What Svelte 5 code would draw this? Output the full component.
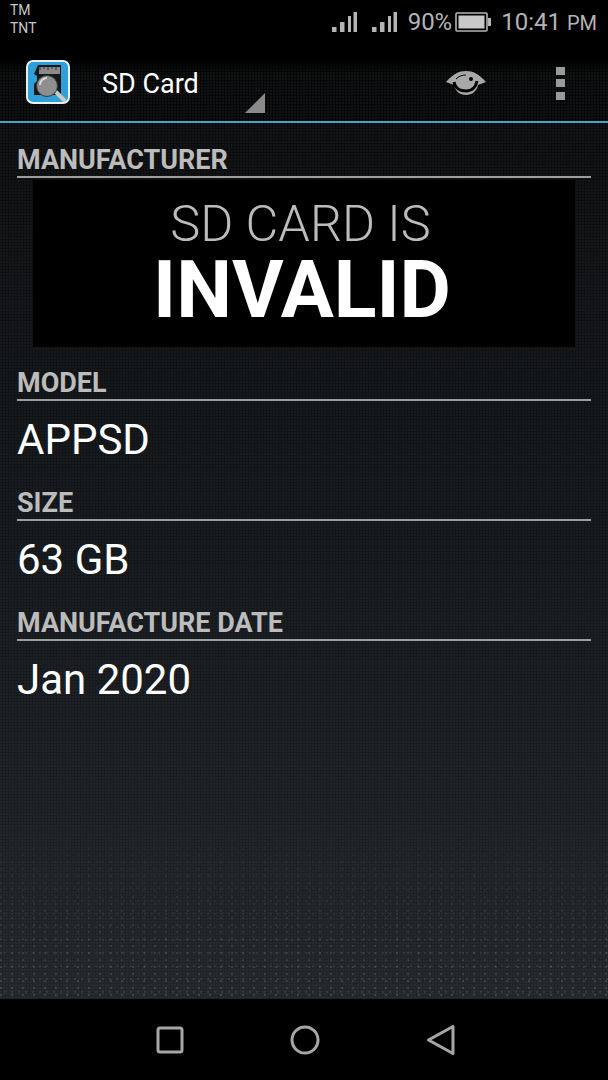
<script>
  const fields = [
    { label: "MODEL", value: "APPSD" },
    { label: "SIZE", value: "63 GB" },
    { label: "MANUFACTURE DATE", value: "Jan 2020" }
  ];
</script>

<div class="phone">
  <header class="status">
    <div class="carrier">
      <span>TM</span>
      <span>TNT</span>
    </div>
    <div class="status-right">
      {#each [0, 1] as s}
        <svg class="signal" width="26" height="22" viewBox="0 0 26 22">
          <rect x="0" y="16" width="4.500" height="5" fill="#b4b4b4" />
          <rect x="8" y="11" width="4.500" height="10" fill="#b4b4b4" />
          <rect x="16" y="5" width="3" height="16" fill="#b4b4b4" />
          <rect x="21.500" y="1" width="3.500" height="20" fill="#b4b4b4" />
        </svg>
      {/each}
      <span class="pct">90%</span>
      <svg class="battery" width="38" height="20" viewBox="0 0 38 20">
        <rect x="1" y="1" width="31" height="18" rx="1" fill="none" stroke="#b4b4b4" stroke-width="1.6" />
        <rect x="3.500" y="3.500" width="26" height="13" fill="#c8c8c8" />
        <rect x="33" y="6" width="3" height="8" fill="#b4b4b4" />
      </svg>
      <span class="time">10:41 <small>PM</small></span>
    </div>
  </header>

  <nav class="actionbar">
    <svg class="logo" width="44" height="44" viewBox="0 0 44 44">
      <rect x="1" y="1" width="42" height="42" rx="6" fill="#2f9fd8" stroke="#e8f0f4" stroke-width="2" />
      <path d="M12 5h23v30H8V24l3-3v-5l-3-2z" fill="#15181b" />
      <rect x="13" y="7" width="21" height="7" fill="#8a8a8a" />
      <path d="M14 7v3M18 7v2M22 7v3M26 7v2M30 7v3" stroke="#2a2a2a" stroke-width="1" />
      <path d="M29 31l9 9" stroke="#c9c9c9" stroke-width="4" stroke-linecap="round" />
      <circle cx="21" cy="26" r="10.500" fill="#8e8e8e" stroke="#3a3a3a" stroke-width="1" />
      <path d="M14 25a7 7 0 0 1 7-7" fill="none" stroke="#d8d8d8" stroke-width="2" />
    </svg>
    <div class="spinner">
      <span>SD Card</span>
      <i class="corner"></i>
    </div>
    <svg class="eye" width="42" height="26" viewBox="0 0 42 26">
      <path d="M1 12C8 4 14 1 21 1s13 3 20 11l-8 3c-1 6-6 10-12 10S10 21 9 15z" fill="#a8a8a8" />
      <path d="M9 12c1 6 6 9 12 9s10-4 11-10" fill="none" stroke="#000" stroke-width="3" />
      <path d="M11 9C14 6 17 5 21 5" fill="none" stroke="#000" stroke-width="1" />
      <circle cx="26" cy="9" r="2" fill="#000" />
    </svg>
    <div class="overflow">
      <i></i><i></i><i></i>
    </div>
  </nav>

  <main class="content">
    <section class="maker">
      <h2>MANUFACTURER</h2>
      <div class="invalid">
        <span class="thin">SD CARD IS</span>
        <span class="bold">INVALID</span>
      </div>
    </section>
    {#each fields as f}
      <section class="field">
        <h2>{f.label}</h2>
        <p>{f.value}</p>
      </section>
    {/each}
  </main>

  <footer class="navbar">
    <svg width="28" height="28" viewBox="0 0 28 28">
      <rect x="2" y="2" width="24" height="24" rx="2" fill="none" stroke="#a6a6a6" stroke-width="3" />
    </svg>
    <svg width="30" height="30" viewBox="0 0 30 30">
      <circle cx="15" cy="15" r="13" fill="none" stroke="#a6a6a6" stroke-width="3" />
    </svg>
    <svg width="30" height="32" viewBox="0 0 30 32">
      <path d="M27 2.500V29.500L2.500 16z" fill="none" stroke="#a6a6a6" stroke-width="3" stroke-linejoin="round" />
    </svg>
  </footer>
</div>

<style>
  :global(body) {
    margin: 0;
    background: #000;
  }

  .phone {
    width: 608px;
    height: 1080px;
    display: flex;
    flex-direction: column;
    font-family: Roboto, "Liberation Sans", sans-serif;
    color: #fff;
    overflow: hidden;
  }

  .status {
    height: 45px;
    flex: none;
    background: #000;
    display: flex;
    justify-content: space-between;
  }

  .carrier {
    display: flex;
    flex-direction: column;
    padding: 1px 0 0 10px;
    font-size: 14px;
    line-height: 18px;
    color: #c8c8c8;
  }

  .status-right {
    display: flex;
    align-items: center;
    padding: 0 11px 2px 0;
    color: #b4b4b4;
  }

  .signal {
    margin-right: 14px;
  }
  .signal + .signal {
    margin-right: 10px;
  }

  .pct {
    font-size: 24px;
    margin-right: 3px;
  }

  .battery {
    margin-right: 8px;
  }

  .time {
    font-size: 24px;
  }
  .time small {
    font-size: 20px;
  }

  .actionbar {
    height: 76px;
    flex: none;
    display: flex;
    align-items: center;
    background:
      linear-gradient(180deg, #000 0, #000 14px, transparent 30px),
      radial-gradient(circle at 1px 1px, rgba(255, 255, 255, 0.05) 0.7px, transparent 0.9px) 0 0 / 3px 3px,
      #050607;
    border-bottom: 2px solid #4f9fc4;
    box-sizing: content-box;
    padding-left: 26px;
  }

  .logo {
    flex: none;
    margin-bottom: 3px;
  }

  .spinner {
    width: 163px;
    height: 76px;
    margin-left: 32px;
    padding-top: 2px;
    box-sizing: border-box;
    position: relative;
    display: flex;
    align-items: center;
    font-size: 27px;
  }

  .corner {
    position: absolute;
    right: 0;
    bottom: 8px;
    width: 0;
    height: 0;
    border-left: 20px solid transparent;
    border-bottom: 20px solid #8a8a8a;
  }

  .eye {
    margin-left: 180px;
  }

  .overflow {
    margin-left: 69px;
    display: flex;
    flex-direction: column;
    gap: 4.500px;
  }
  .overflow i {
    width: 9px;
    height: 8px;
    background: #9a9a9a;
  }

  .content {
    flex: 1;
    position: relative;
    padding: 23px 17px 0;
    background:
      radial-gradient(circle at 1px 1px, rgba(255, 255, 255, 0.03) 0.7px, transparent 0.9px) 0 0 / 3px 3px,
      linear-gradient(180deg, #0b0c0e 0%, #111417 35%, #181b1f 70%, #212428 100%);
  }

  /* sparse grain that shows up toward the bottom of the wallpaper */
  .content::after {
    content: "";
    position: absolute;
    left: 0;
    right: 0;
    bottom: 0;
    height: 180px;
    background:
      radial-gradient(circle at 1px 1px, rgba(255, 255, 255, 0.14) 0.7px, transparent 1px) 0 0 / 11px 7px,
      radial-gradient(circle at 2px 2px, rgba(255, 255, 255, 0.1) 0.7px, transparent 1px) 3px 2px / 7px 13px;
    mask-image: linear-gradient(180deg, transparent, #000);
  }

  h2 {
    margin: 0;
    height: 32px;
    line-height: 29px;
    box-sizing: border-box;
    font-size: 27px;
    font-weight: 700;
    color: #bcbcbc;
    border-bottom: 2px solid #9e9e9e;
  }

  .maker {
    padding-bottom: 1px;
  }

  .invalid {
    margin: 2px 16px 0;
    padding-right: 7px;
    height: 167px;
    background: #000;
    display: flex;
    flex-direction: column;
    align-items: center;
  }

  .thin {
    font-size: 50.500px;
    font-weight: 300;
    line-height: 53px;
    margin-top: 16.500px;
    color: #bcbcbc;
  }

  .bold {
    font-size: 79px;
    font-weight: 700;
    line-height: 78px;
    margin-top: 1.500px;
    margin-left: 3px;
    color: #fff;
  }

  .field {
    margin-top: 21px;
  }
  .field p {
    margin: 0;
    height: 67px;
    line-height: 78px;
    font-size: 42px;
  }

  .navbar {
    height: 81px;
    flex: none;
    background: #000;
    display: flex;
    align-items: center;
    padding-left: 156px;
    gap: 106px;
  }
</style>
